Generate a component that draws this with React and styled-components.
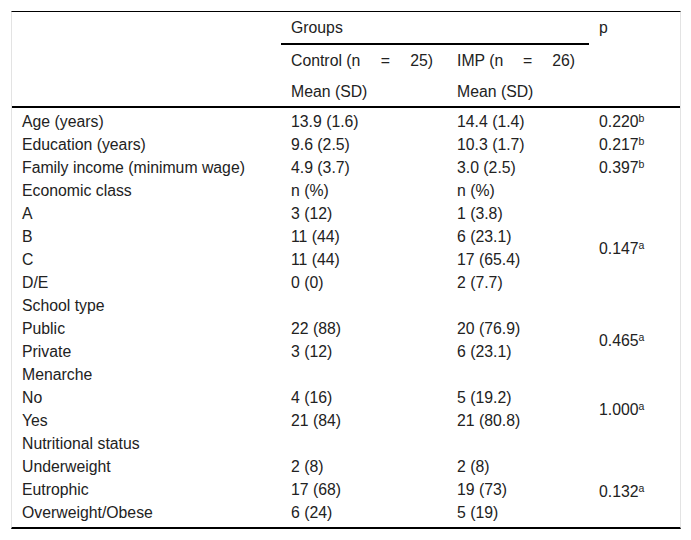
import React from 'react'
import styled, { createGlobalStyle } from 'styled-components'

const GlobalStyle = createGlobalStyle`
  body {
    margin: 0;
    background: #fff;
    font-family: "Liberation Sans", Arial, sans-serif;
    color: #222;
  }
`

const Table = styled.table`
  margin: 11px;
  width: 670px;
  border-collapse: separate;
  border-spacing: 0;
  table-layout: fixed;
  border-top: 1px solid #000;
  border-bottom: 2px solid #000;
  border-left: 1px solid #e3e3e3;
  border-right: 1px solid #e3e3e3;
  font-size: 15.8px;
  line-height: 17px;
`

const HeadCell = styled.th`
  text-align: left;
  font-weight: normal;
  vertical-align: ${props => (props.$top ? 'top' : 'middle')};
  padding: ${props => props.$pad || '7px 10px'};
  border-bottom: ${props => (props.$line ? '2px solid #000' : 'none')};
  white-space: nowrap;
`

// "Control (n = 25)" is set justified across its cell in the source
const Spread = styled.span`
  display: flex;
  justify-content: space-between;
  margin-right: 4px;
`

const Row = styled.tr`
  &:first-child td {
    padding-top: 5px;
  }
  &:last-child td {
    padding-bottom: 6px;
  }
`

const Cell = styled.td`
  padding: 3px 10px;
  vertical-align: middle;
  white-space: nowrap;
`

const Sup = styled.sup`
  font-size: 10.5px;
  line-height: 0;
  vertical-align: 5px;
`

const rows = [
  { label: 'Age (years)', a: '13.9 (1.6)', b: '14.4 (1.4)', p: ['0.220', 'b'] },
  { label: 'Education (years)', a: '9.6 (2.5)', b: '10.3 (1.7)', p: ['0.217', 'b'] },
  { label: 'Family income (minimum wage)', a: '4.9 (3.7)', b: '3.0 (2.5)', p: ['0.397', 'b'] },
  { label: 'Economic class', a: 'n (%)', b: 'n (%)', empty: true },
  { label: 'A', a: '3 (12)', b: '1 (3.8)', p: ['0.147', 'a'], span: 4 },
  { label: 'B', a: '11 (44)', b: '6 (23.1)' },
  { label: 'C', a: '11 (44)', b: '17 (65.4)' },
  { label: 'D/E', a: '0 (0)', b: '2 (7.7)' },
  { label: 'School type', a: '', b: '', empty: true },
  { label: 'Public', a: '22 (88)', b: '20 (76.9)', p: ['0.465', 'a'], span: 2 },
  { label: 'Private', a: '3 (12)', b: '6 (23.1)' },
  { label: 'Menarche', a: '', b: '', empty: true },
  { label: 'No', a: '4 (16)', b: '5 (19.2)', p: ['1.000', 'a'], span: 2 },
  { label: 'Yes', a: '21 (84)', b: '21 (80.8)' },
  { label: 'Nutritional status', a: '', b: '', empty: true },
  { label: 'Underweight', a: '2 (8)', b: '2 (8)', p: ['0.132', 'a'], span: 3 },
  { label: 'Eutrophic', a: '17 (68)', b: '19 (73)' },
  { label: 'Overweight/Obese', a: '6 (24)', b: '5 (19)' },
]

const GroupLabel = ({ name, n }) => (
  <Spread>
    <span>{name} (n</span>
    <span>=</span>
    <span>{n})</span>
  </Spread>
)

const App = () => {
  return (
    <>
      <GlobalStyle />
      <Table>
        <colgroup>
          <col style={{ width: 269 }} />
          <col style={{ width: 166 }} />
          <col style={{ width: 142 }} />
          <col style={{ width: 91 }} />
        </colgroup>
        <thead>
          <tr>
            <HeadCell rowSpan={3} $line />
            <HeadCell colSpan={2} $line>Groups</HeadCell>
            <HeadCell rowSpan={3} $line $top>p</HeadCell>
          </tr>
          <tr>
            <HeadCell>
              <GroupLabel name="Control" n={25} />
            </HeadCell>
            <HeadCell>
              <GroupLabel name="IMP" n={26} />
            </HeadCell>
          </tr>
          <tr>
            <HeadCell $line $pad="7px 10px 6px">Mean (SD)</HeadCell>
            <HeadCell $line $pad="7px 10px 6px">Mean (SD)</HeadCell>
          </tr>
        </thead>
        <tbody>
          {rows.map(r => (
            <Row key={r.label}>
              <Cell>{r.label}</Cell>
              <Cell>{r.a}</Cell>
              <Cell>{r.b}</Cell>
              {r.p && (
                <Cell rowSpan={r.span || 1}>
                  {r.p[0]}
                  <Sup>{r.p[1]}</Sup>
                </Cell>
              )}
              {r.empty && <Cell />}
            </Row>
          ))}
        </tbody>
      </Table>
    </>
  )
}

export default App
